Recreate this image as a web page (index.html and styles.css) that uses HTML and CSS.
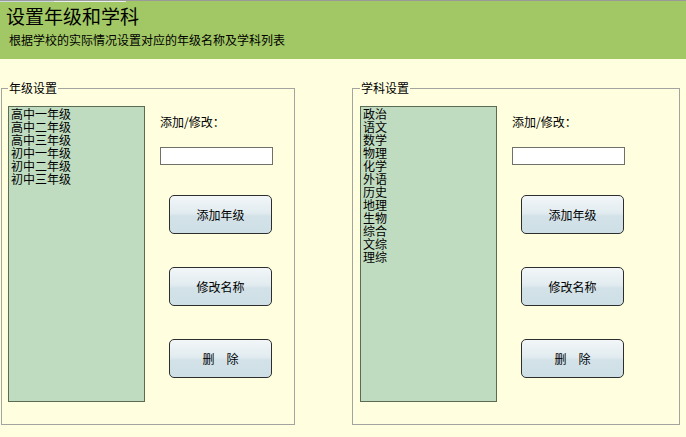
FILE: index.html
```html
<!DOCTYPE html>
<html lang="zh-CN">
<head>
<meta charset="utf-8">
<title>设置年级和学科</title>
<link rel="stylesheet" href="styles.css">
</head>
<body>
<div class="topline"><span class="tab1"></span><span class="tab2"></span></div>
<header class="header">
  <h1 class="title">设置年级和学科</h1>
  <p class="subtitle">根据学校的实际情况设置对应的年级名称及学科列表</p>
</header>
<main class="main">
  <fieldset class="group group-grade">
    <legend class="legend">年级设置</legend>
    <div class="group-body">
      <ul class="list">
        <li>高中一年级</li>
        <li>高中二年级</li>
        <li>高中三年级</li>
        <li>初中一年级</li>
        <li>初中二年级</li>
        <li>初中三年级</li>
      </ul>
      <div class="controls">
        <div class="label">添加/修改：</div>
        <input class="input" type="text">
        <div class="buttons">
          <button class="btn">添加年级</button>
          <button class="btn">修改名称</button>
          <button class="btn">删　除</button>
        </div>
      </div>
    </div>
  </fieldset>
  <fieldset class="group group-subject">
    <legend class="legend">学科设置</legend>
    <div class="group-body">
      <ul class="list">
        <li>政治</li>
        <li>语文</li>
        <li>数学</li>
        <li>物理</li>
        <li>化学</li>
        <li>外语</li>
        <li>历史</li>
        <li>地理</li>
        <li>生物</li>
        <li>综合</li>
        <li>文综</li>
        <li>理综</li>
      </ul>
      <div class="controls">
        <div class="label">添加/修改：</div>
        <input class="input" type="text">
        <div class="buttons">
          <button class="btn">添加年级</button>
          <button class="btn">修改名称</button>
          <button class="btn">删　除</button>
        </div>
      </div>
    </div>
  </fieldset>
</main>
</body>
</html>
```
FILE: styles.css
```css
* { box-sizing: border-box; }
html, body {
  margin: 0;
  padding: 0;
  background: #ffffe0;
  font-family: "Noto Sans CJK SC", "Noto Sans", sans-serif;
  color: #000;
  width: 686px;
  height: 437px;
  overflow: hidden;
}
.topline {
  display: flex;
  height: 2px;
  background: #a2c865;
  border-top: 1px solid #9a9a9a;
}
.tab1 { display: block; width: 54px; background: #c8d8e0; }
.tab2 { display: block; width: 72px; background: #e8eef0; }
.header {
  background: #a2c865;
  height: 57px;
  padding: 2px 0 0 6px;
}
.title {
  margin: 0;
  font-size: 19px;
  font-weight: normal;
  line-height: 24px;
}
.subtitle {
  margin: 4px 0 0 3px;
  font-size: 12px;
  line-height: 16px;
}
.main {
  display: flex;
  gap: 57px;
  padding: 22px 0 0 1px;
}
.group {
  margin: 0;
  padding: 0 0 22px 6px;
  border: 1px solid #a3a3a0;
  min-width: 0;
}
.group-grade { width: 294px; }
.group-subject { width: 328px; padding-left: 7px; }
.legend {
  font-size: 12px;
  line-height: 14px;
  padding: 0 1px;
  margin-left: 0;
}
.group-body {
  display: flex;
  padding-top: 11px;
}
.list {
  list-style: none;
  margin: 0;
  padding: 0 0 0 2px;
  width: 137px;
  height: 296px;
  background: #c0dcc0;
  border: 1px solid #5c6c54;
  font-size: 12px;
  line-height: 13px;
}
.controls {
  display: flex;
  flex-direction: column;
  align-items: flex-start;
  padding: 9px 0 0 15px;
}
.label {
  font-size: 12px;
  line-height: 14px;
}
.input {
  margin-top: 18px;
  width: 113px;
  height: 18px;
  border: 1px solid #707068;
  background: #fff;
  padding: 0;
}
.buttons {
  display: flex;
  flex-direction: column;
  gap: 33px;
  margin: 30px 0 0 9px;
}
.btn {
  width: 103px;
  height: 39px;
  border: 1px solid #2e2e2e;
  border-radius: 5px;
  background: linear-gradient(#f2f6f8 0%, #e2ecf0 45%, #d2e2e8 55%, #cfdfe6 100%);
  font-family: "Noto Sans CJK SC", sans-serif;
  font-size: 12px;
  color: #000;
  padding: 0;
}
```
